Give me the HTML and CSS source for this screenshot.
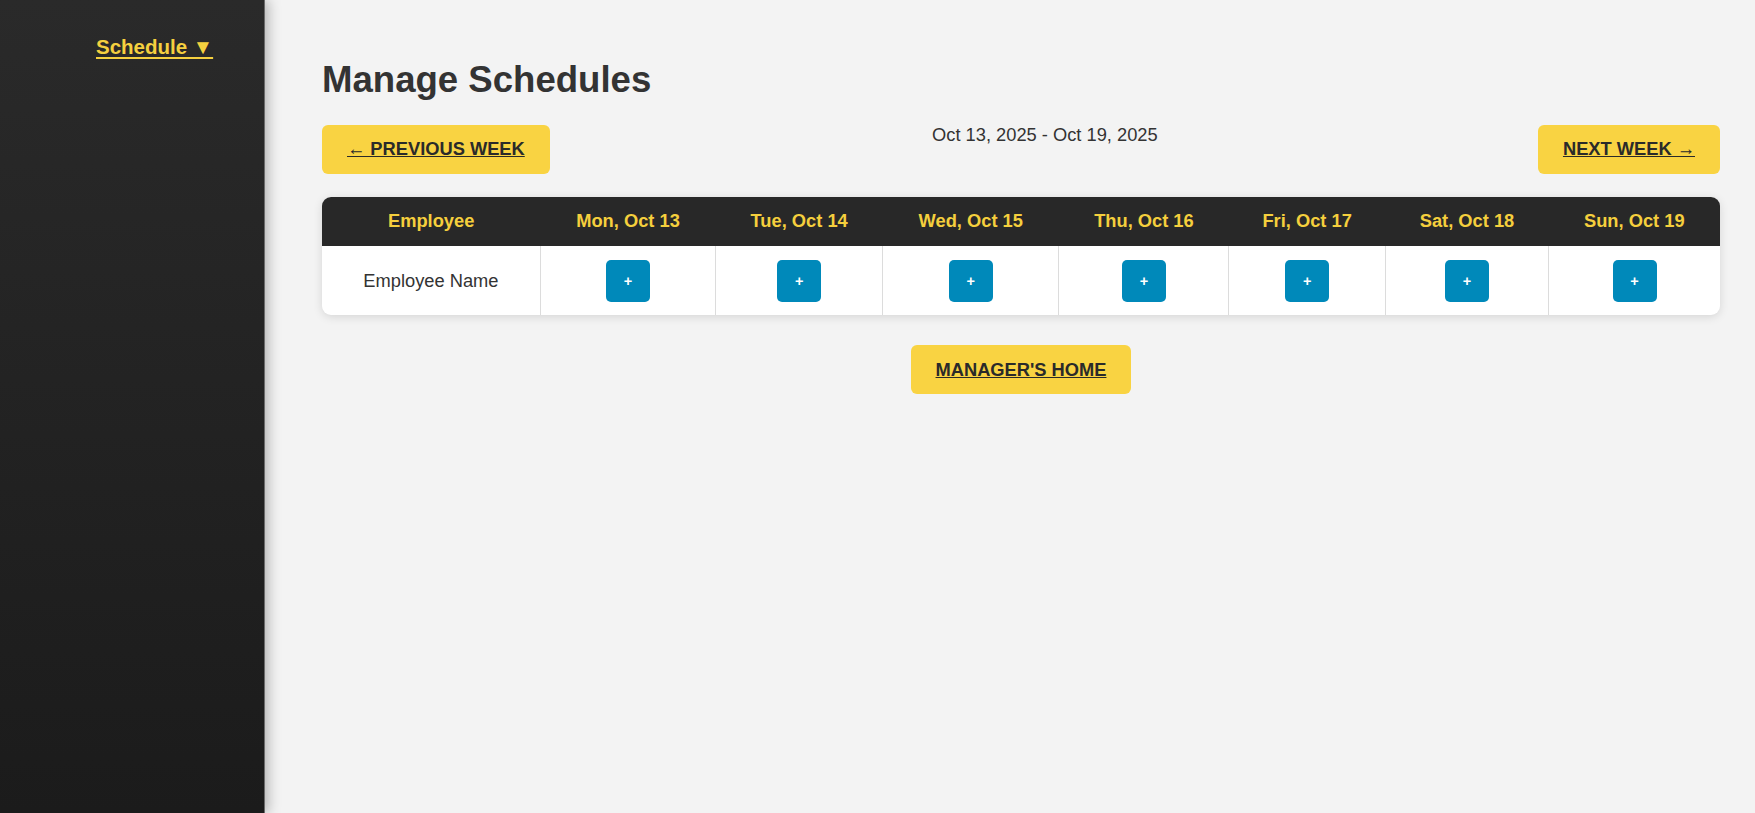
FILE: index.html
```html
<!DOCTYPE html>
<html lang="en">
<head>
<meta charset="utf-8">
<title>Manage Schedules</title>
<link rel="stylesheet" href="styles.css">
</head>
<body>
<div class="layout">
  <aside class="sidebar">
    <a class="nav-link" href="#">Schedule ▼</a>
  </aside>
  <main class="main">
    <h1 class="title">Manage Schedules</h1>
    <div class="week-nav">
      <a class="btn" href="#">← Previous Week</a>
      <div class="week-range">Oct 13, 2025 - Oct 19, 2025</div>
      <a class="btn" href="#">Next Week →</a>
    </div>
    <div class="table-wrap">
      <table class="schedule">
        <thead>
          <tr>
            <th>Employee</th>
            <th>Mon, Oct 13</th>
            <th>Tue, Oct 14</th>
            <th>Wed, Oct 15</th>
            <th>Thu, Oct 16</th>
            <th>Fri, Oct 17</th>
            <th>Sat, Oct 18</th>
            <th>Sun, Oct 19</th>
          </tr>
        </thead>
        <tbody>
          <tr>
            <td>Employee Name</td>
            <td><button class="add-btn">+</button></td>
            <td><button class="add-btn">+</button></td>
            <td><button class="add-btn">+</button></td>
            <td><button class="add-btn">+</button></td>
            <td><button class="add-btn">+</button></td>
            <td><button class="add-btn">+</button></td>
            <td><button class="add-btn">+</button></td>
          </tr>
        </tbody>
      </table>
    </div>
    <div class="home-row">
      <a class="btn" href="#">Manager's Home</a>
    </div>
  </main>
</div>
</body>
</html>
```

FILE: styles.css
```css
* { box-sizing: border-box; }

html, body {
  margin: 0;
  height: 100%;
}

body {
  font-family: "Liberation Sans", Arial, sans-serif;
  background: #f3f3f3;
  color: #333;
}

.layout {
  display: flex;
  min-height: 100vh;
}

.sidebar {
  width: 265px;
  flex: 0 0 265px;
  background: linear-gradient(180deg, #2a2a2a 0%, #1b1b1b 100%);
  border-right: 1px solid #6a6a6a;
  box-shadow: 3px 0 12px rgba(0, 0, 0, 0.28);
  padding: 35px 0 0 96px;
  position: relative;
  z-index: 1;
}

.nav-link {
  color: #f5d03f;
  font-weight: bold;
  font-size: 20.5px;
  text-decoration: underline;
  text-underline-offset: 3px;
}

.main {
  flex: 1;
  padding: 34px 35px 0 57px;
}

.title {
  font-size: 36.6px;
  font-weight: bold;
  color: #333;
  margin: 24.5px 0 24px;
}

.week-nav {
  display: grid;
  grid-template-columns: auto 1fr auto;
  align-items: start;
}

.week-range {
  text-align: center;
  font-size: 18.3px;
  color: #333;
  padding-left: 2px;
  margin-top: -1px;
}

.btn {
  display: inline-block;
  background: #f9d342;
  color: #2a2a2a;
  font-weight: bold;
  font-size: 18.3px;
  text-transform: uppercase;
  text-decoration: underline;
  padding: 13.5px 25px;
  border-radius: 6px;
}

.table-wrap {
  margin-top: 23px;
  background: #fff;
  border-radius: 9px;
  overflow: hidden;
  box-shadow: 0 2px 10px rgba(0, 0, 0, 0.12);
}

.schedule {
  width: 100%;
  border-collapse: collapse;
}

.schedule th {
  background: #282828;
  color: #f5cf3d;
  font-size: 18.3px;
  font-weight: bold;
  padding: 13.7px;
  text-align: center;
}

.schedule td {
  font-size: 18.3px;
  color: #333;
  padding: 13.7px;
  text-align: center;
  vertical-align: middle;
}

.schedule td:not(:last-child) {
  border-right: 1px solid #dcdcdc;
}

.add-btn {
  display: inline-block;
  background: #0089ba;
  color: #fff;
  border: none;
  border-radius: 5px;
  font-family: "Liberation Sans", Arial, sans-serif;
  font-weight: bold;
  font-size: 14.5px;
  width: 44px;
  height: 42px;
  padding: 0;
  vertical-align: middle;
}

.home-row {
  margin-top: 30px;
  text-align: center;
}
```
